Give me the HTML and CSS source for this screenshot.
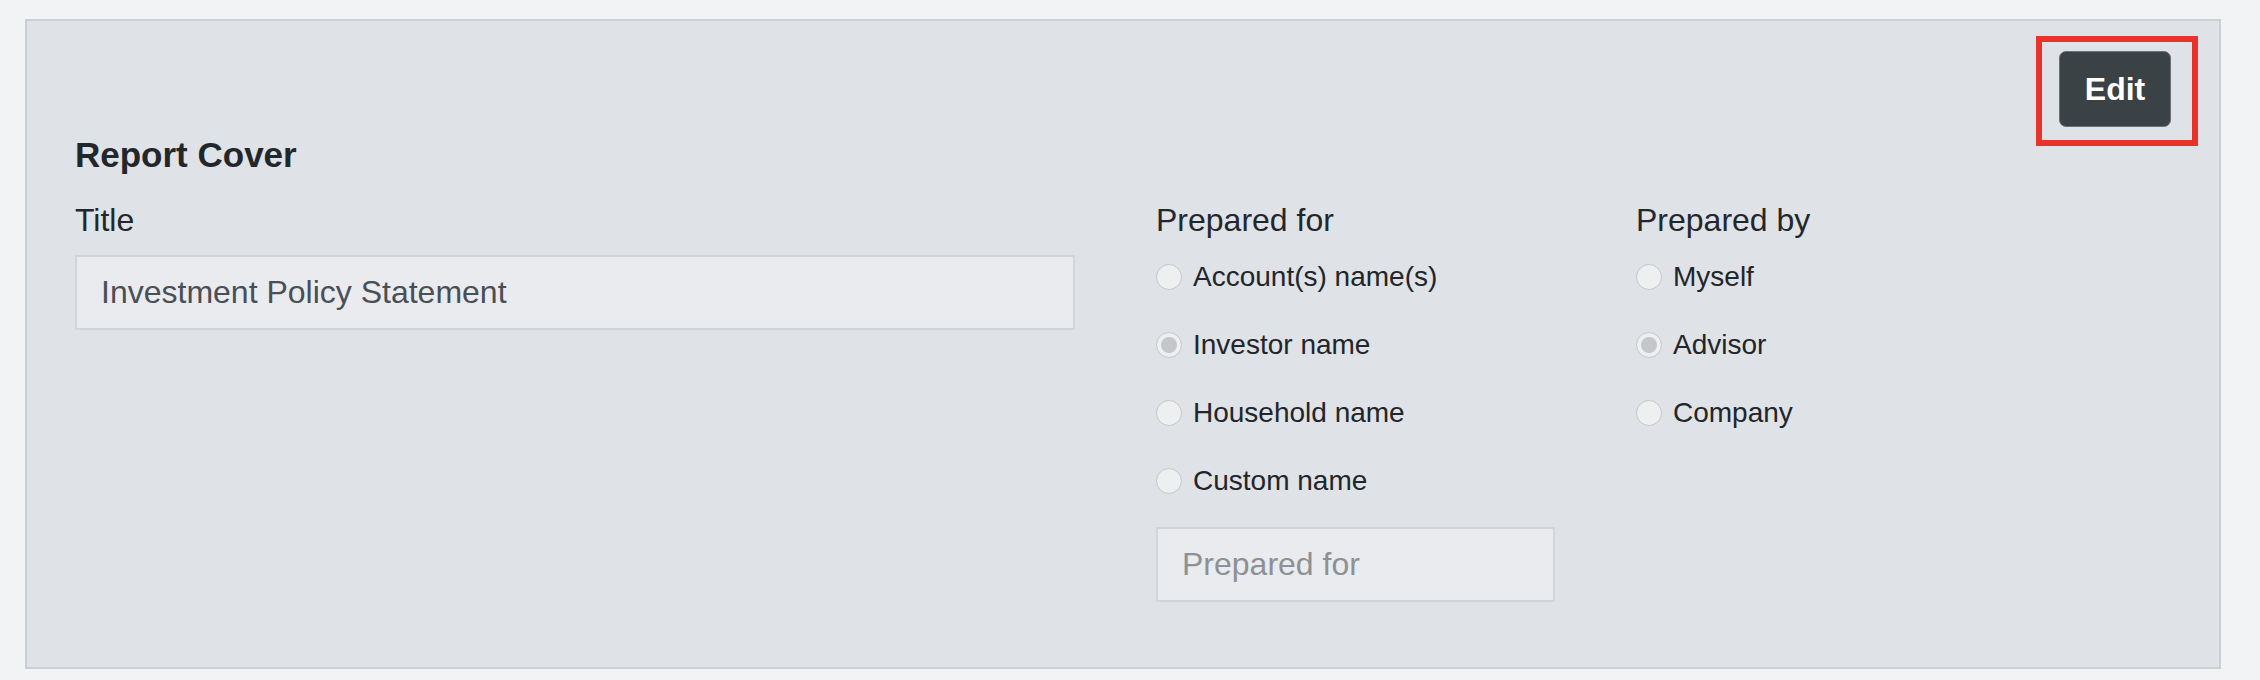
FILE: index.html
```html
<!DOCTYPE html>
<html lang="en">
<head>
<meta charset="utf-8">
<title>Report Cover</title>
<link rel="stylesheet" href="styles.css">
</head>
<body>
<section class="panel">
  <div class="toolbar">
    <div class="edit-wrap">
      <button class="edit-btn" type="button">Edit</button>
      <span class="highlight"></span>
    </div>
  </div>
  <h2 class="heading">Report Cover</h2>
  <div class="fields">
    <div class="col col-title">
      <label class="label">Title</label>
      <div class="input input-value">Investment Policy Statement</div>
    </div>
    <div class="col">
      <div class="label">Prepared for</div>
      <div class="options">
        <div class="option"><span class="radio"></span><span>Account(s) name(s)</span></div>
        <div class="option"><span class="radio checked"></span><span>Investor name</span></div>
        <div class="option"><span class="radio"></span><span>Household name</span></div>
        <div class="option"><span class="radio"></span><span>Custom name</span></div>
      </div>
      <div class="input input-placeholder">Prepared for</div>
    </div>
    <div class="col">
      <div class="label">Prepared by</div>
      <div class="options">
        <div class="option"><span class="radio"></span><span>Myself</span></div>
        <div class="option"><span class="radio checked"></span><span>Advisor</span></div>
        <div class="option"><span class="radio"></span><span>Company</span></div>
      </div>
    </div>
  </div>
</section>
</body>
</html>
```
FILE: styles.css
```css
* { box-sizing: border-box; }

html, body {
  margin: 0;
  padding: 0;
  background: #f2f3f5;
  font-family: "Liberation Sans", Arial, Helvetica, sans-serif;
  color: #23272b;
}

.panel {
  margin: 19px 39px 0 25px;
  background: #dfe2e7;
  border: 2px solid #c9cfd3;
  padding: 30px 48px 65px 48px;
}

.toolbar {
  display: flex;
  justify-content: flex-end;
}

.edit-wrap {
  position: relative;
  width: 112px;
  height: 76px;
}

.edit-btn {
  width: 112px;
  height: 76px;
  background: #3b4246;
  border: 1.5px solid #6b7277;
  border-radius: 7px;
  color: #ffffff;
  font-family: "Liberation Sans", Arial, Helvetica, sans-serif;
  font-weight: 700;
  font-size: 32px;
  padding: 0;
}

.highlight {
  position: absolute;
  left: -23px;
  top: -15px;
  width: 162px;
  height: 110px;
  border: 6px solid #e8332a;
  pointer-events: none;
}

.heading {
  margin: 7px 0 0 0;
  font-size: 35px;
  line-height: 42px;
  font-weight: 700;
  color: #23272b;
}

.fields {
  margin-top: 26px;
  display: grid;
  grid-template-columns: 1000px 399px 1fr;
  column-gap: 81px;
  align-items: start;
}

.col {
  display: flex;
  flex-direction: column;
}

.label {
  font-size: 32px;
  line-height: 37px;
  color: #23272b;
}

.input {
  height: 75px;
  border: 2px solid #d2d5da;
  background: #e9ebef;
  font-size: 32px;
  display: flex;
  align-items: center;
  padding: 0 24px;
}

.col-title .input { margin-top: 16px; }

.input-value { color: #4a4f55; }

.input-placeholder {
  margin-top: 29px;
  color: #8d9094;
}

.options {
  margin-top: 20px;
  display: flex;
  flex-direction: column;
  gap: 33px;
}

.option {
  display: flex;
  align-items: center;
  gap: 11px;
  height: 35px;
  font-size: 28px;
  color: #222529;
}

.radio {
  width: 26px;
  height: 26px;
  border-radius: 50%;
  border: 1.5px solid #c4c6c9;
  background: #eeeff1;
  flex: none;
  display: flex;
  align-items: center;
  justify-content: center;
}

.radio.checked::after {
  content: "";
  width: 16px;
  height: 16px;
  border-radius: 50%;
  background: #c5c6c9;
}
```
